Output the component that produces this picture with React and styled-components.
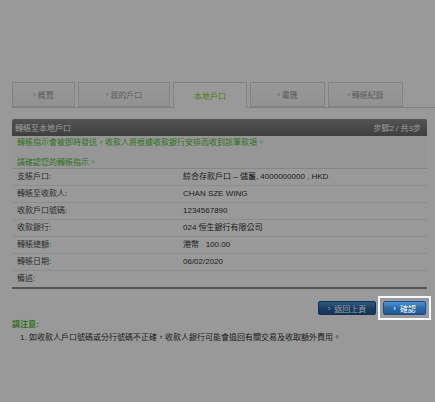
import React from "react";
import styled, { createGlobalStyle } from "styled-components";

const GlobalStyle = createGlobalStyle`
  html, body {
    margin: 0;
    padding: 0;
    background: #ffffff;
  }
  body {
    font-family: "Liberation Sans", "Noto Sans CJK TC", Arial, sans-serif;
    font-size: 8px;
    color: #333;
  }
`;

const Page = styled.div`
  padding: 82px 0 60px 12px;
`;

const TabBar = styled.div`
  display: flex;
  gap: 3px;
  height: 25px;
  border-bottom: 1px solid #d4d4d4;
`;

const Tab = styled.div`
  box-sizing: border-box;
  width: ${({ $w }) => $w}px;
  height: ${({ $active }) => ($active ? 26 : 25)}px;
  display: flex;
  align-items: center;
  justify-content: center;
  gap: 2px;
  border: 1px solid #dadada;
  border-bottom: ${({ $active }) => ($active ? "none" : "1px solid #dadada")};
  background: ${({ $active }) =>
    $active ? "#ffffff" : "linear-gradient(#ffffff, #f2f2f2)"};
  color: ${({ $active }) => ($active ? "#8ccc2a" : "#9a9a9a")};
  font-size: 8px;
`;

const Bullet = styled.span`
  font-size: 8px;
  color: ${({ $light }) => ($light ? "#ffffff" : "#8aa6c4")};
`;

const Panel = styled.div`
  width: 415px;
  margin-top: 11px;
`;

const PanelHeader = styled.div`
  height: 17px;
  display: flex;
  align-items: center;
  justify-content: space-between;
  padding: 0 6px 0 3px;
  border-radius: 2px 2px 0 0;
  background: linear-gradient(#8a8a8a, #6a6a6a);
  color: #ffffff;
`;

const Notice = styled.div`
  padding: 2px 5px 0;
  background: #fbfbfb;
  border-bottom: 1px solid #e0e0e0;
  color: #4fbf35;
`;

const NoticeLine = styled.p`
  margin: 0;
  line-height: 10px;
  & + & {
    margin-top: 10px;
  }
`;

const DetailRow = styled.div`
  display: grid;
  grid-template-columns: 171px 1fr;
  height: 16px;
  line-height: 16px;
  border-bottom: ${({ $last }) =>
    $last ? "2px solid #8a8a8a" : "1px solid #ececec"};
  color: #333;
`;

const Label = styled.span`
  padding-left: 5px;
  color: #4a4a4a;
`;

const Value = styled.span`
  white-space: pre;
`;

const Actions = styled.div`
  display: flex;
  justify-content: flex-end;
  align-items: center;
  gap: 7px;
  margin-top: 12px;
  padding-right: 1px;
`;

const HighlightFrame = styled.span`
  position: relative;
  z-index: 20;
  display: flex;
  margin: -5px -5px -5px -5px;
  padding: 3px;
  border: 2px solid #f4f9ff;
  background: #9a9a9a;
`;

const Button = styled.button`
  height: 14px;
  padding: 0 9px;
  display: flex;
  align-items: center;
  gap: 4px;
  border: 1px solid #1d4f82;
  border-radius: 2px;
  background: linear-gradient(#4a93d4, #2a67a6 55%, #1f5a95);
  color: #ffffff;
  font-family: inherit;
  font-size: 8px;
  cursor: pointer;
`;

const NoteTitle = styled.div`
  margin-top: 5px;
  line-height: 10px;
  color: #4fbf35;
  font-weight: bold;
`;

const NoteText = styled.div`
  margin-top: 3px;
  padding-left: 8px;
  line-height: 10px;
  color: #333;
`;

const Overlay = styled.div`
  position: fixed;
  inset: 0;
  background: rgba(0, 0, 0, 0.4);
  z-index: 10;
`;

const tabs = [
  { label: "概覽", w: 63 },
  { label: "我的戶口", w: 92 },
  { label: "本地戶口", w: 74, active: true },
  { label: "電匯", w: 75 },
  { label: "轉賬紀錄", w: 75 },
];

const details = [
  ["支賬戶口:", "綜合存款戶口 – 儲蓄, 4000000000 , HKD"],
  ["轉賬至收款人:", "CHAN SZE WING"],
  ["收款戶口號碼:", "1234567890"],
  ["收款銀行:", "024 恒生銀行有限公司"],
  ["轉賬總額:", "港幣   100.00"],
  ["轉賬日期:", "06/02/2020"],
  ["備述:", ""],
];

export default function App() {
  return (
    <>
      <GlobalStyle />
      <Page>
        <TabBar>
          {tabs.map((t) => (
            <Tab key={t.label} $w={t.w} $active={t.active}>
              {!t.active && <Bullet>›</Bullet>}
              {t.label}
            </Tab>
          ))}
        </TabBar>

        <Panel>
          <PanelHeader>
            <span>轉賬至本地戶口</span>
            <span>步驟2 / 共3步</span>
          </PanelHeader>
          <Notice>
            <NoticeLine>轉賬指示會被即時發送，收款人將根據收款銀行安排而收到該筆款項。</NoticeLine>
            <NoticeLine>請確認您的轉賬指示。</NoticeLine>
          </Notice>
          {details.map(([label, value], i) => (
            <DetailRow key={label} $last={i === details.length - 1}>
              <Label>{label}</Label>
              <Value>{value}</Value>
            </DetailRow>
          ))}

          <Actions>
            <Button>
              <Bullet $light>›</Bullet>返回上頁
            </Button>
            <HighlightFrame>
              <Button>
                <Bullet $light>›</Bullet>確認
              </Button>
            </HighlightFrame>
          </Actions>

          <NoteTitle>請注意:</NoteTitle>
          <NoteText>1. 如收款人戶口號碼或分行號碼不正確，收款人銀行可能會退回有關交易及收取額外費用。</NoteText>
        </Panel>
      </Page>
      <Overlay />
    </>
  );
}
